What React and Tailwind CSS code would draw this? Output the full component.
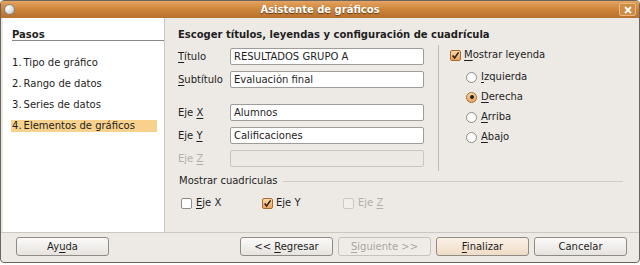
import React from 'react';

const font = "font-['DejaVu_Sans',sans-serif]";

function U({ children }) {
  return <span className="underline decoration-1 underline-offset-[2px]">{children}</span>;
}

function Check({ checked, disabled }) {
  if (disabled) {
    return <span className="block w-[11px] h-[11px] rounded-[2px] border border-[#cbc7c2] bg-[#f1efec]" />;
  }
  if (checked) {
    return (
      <span className="flex items-center justify-center w-[11px] h-[11px] rounded-[2px] border border-[#a36c2f] bg-gradient-to-b from-[#f9d7a6] to-[#eca35c]">
        <svg viewBox="0 0 9 9" className="w-[9px] h-[9px]">
          <path d="M1.6 4.6 L3.6 7 L7.6 1.4" fill="none" stroke="#2b2418" strokeWidth="1.6" />
        </svg>
      </span>
    );
  }
  return <span className="block w-[11px] h-[11px] rounded-[2px] border border-[#8f8b86] bg-white" />;
}

function Radio({ checked }) {
  return (
    <span
      className={`flex items-center justify-center w-[11px] h-[11px] rounded-full border ${
        checked
          ? 'border-[#a36c2f] bg-gradient-to-b from-[#f9d7a6] to-[#eca35c]'
          : 'border-[#8f8b86] bg-white'
      }`}
    >
      {checked && <span className="block w-[4px] h-[4px] rounded-full bg-[#222]" />}
    </span>
  );
}

function Field({ label, value, disabled }) {
  return (
    <div className="flex items-center h-[17px]">
      <span className={`w-[52px] leading-[12px] ${disabled ? 'text-[#b3afaa]' : 'text-[#1e1e1e]'}`}>{label}</span>
      <div
        className={`w-[194px] h-[17px] rounded-[2px] border flex items-center pl-[3px] leading-[12px] ${
          disabled ? 'border-[#c8c4bf] bg-[#ece9e5]' : 'border-[#9f9b96] bg-white text-[#1e1e1e]'
        }`}
      >
        {value}
      </div>
    </div>
  );
}

function Button({ children, variant }) {
  const look =
    variant === 'disabled'
      ? 'border-[#c6c2bc] bg-[#efece8] text-[#aaa6a1]'
      : variant === 'default'
      ? 'border-[#8f8b86] bg-gradient-to-b from-[#fbf1e6] to-[#efdcc7] text-[#1e1e1e]'
      : 'border-[#8f8b86] bg-gradient-to-b from-[#fbfaf9] to-[#e6e3df] text-[#1e1e1e]';
  return (
    <div className={`w-[93px] h-[19px] rounded-[3px] border flex items-center justify-center leading-[12px] ${look}`}>
      <span className="whitespace-pre">{children}</span>
    </div>
  );
}

export default function App() {
  const steps = ['Tipo de gráfico', 'Rango de datos', 'Series de datos', 'Elementos de gráficos'];

  return (
    <div className={`w-[640px] h-[265px] bg-white text-[10px] ${font}`}>
      <div className="h-[263px] flex flex-col overflow-hidden rounded-[4px] border border-[#6b655f] bg-[#edeae6]">
        {/* Title bar */}
        <div className="h-[17px] shrink-0 grid grid-cols-[1fr_auto_1fr] items-center px-[3px] bg-gradient-to-b from-[#e4a461] via-[#cd8439] to-[#b8712f]">
          <span className="block w-[11px] h-[11px] rounded-full border border-[#8a7f76] bg-[radial-gradient(circle_at_35%_35%,#ffffff,#d9d9d9_60%,#a9a9a9)]" />
          <span className="font-bold text-white leading-[17px] [text-shadow:0_1px_1px_rgba(60,30,0,0.7)]">
            Asistente de gráficos
          </span>
          <div className="flex justify-end">
            <div className="w-[17px] h-[13px] rounded-[2px] border border-[#eab982] bg-[#d08c45] flex items-center justify-center">
              <svg viewBox="0 0 8 8" className="w-[8px] h-[8px]">
                <path d="M1 1 L7 7 M7 1 L1 7" stroke="#ffffff" strokeWidth="1.8" />
              </svg>
            </div>
          </div>
        </div>

        {/* Main */}
        <div className="h-[214px] shrink-0 flex pl-[2px]">
          <div className="w-[162px] bg-white border-r border-[#cbc7c1] pt-[11px]">
            <div className="ml-[9px] font-bold leading-[11px] text-[#1e1e1e]">Pasos</div>
            <div className="ml-[9px] h-px bg-[#8c8a87]" />
            <div className="mt-[16px] flex flex-col gap-[9px]">
              {steps.map((s, i) => (
                <div
                  key={s}
                  className={`ml-[8px] w-[146px] h-[12px] pl-[1px] leading-[12px] text-[#1e1e1e] flex ${
                    i === 3 ? 'bg-[#f8d28d]' : ''
                  }`}
                >
                  <span>{i + 1}.</span>
                  <span className="ml-[2px]">{s}</span>
                </div>
              ))}
            </div>
          </div>

          <div className="flex-1 flex flex-col pl-[13px] pt-[11px] text-[#1e1e1e]">
            <div className="font-bold leading-[12px]">
              Escoger títulos, leyendas y configuración de cuadrícula
            </div>

            <div className="mt-[4px] flex">
              <div className="w-[246px] pt-[3px] flex flex-col">
                <Field label={<><U>T</U>ítulo</>} value="RESULTADOS GRUPO A" />
                <div className="mt-[6px]">
                  <Field label={<><U>S</U>ubtítulo</>} value="Evaluación final" />
                </div>
                <div className="mt-[16px]">
                  <Field label={<>Eje <U>X</U></>} value="Alumnos" />
                </div>
                <div className="mt-[6px]">
                  <Field label={<>Eje <U>Y</U></>} value="Calificaciones" />
                </div>
                <div className="mt-[6px]">
                  <Field label={<>Eje <U>Z</U></>} value="" disabled />
                </div>
              </div>

              <div className="ml-[14px] w-px h-[126px] bg-[#bfbbb5]" />

              <div className="pl-[11px] pt-[3px] flex flex-col">
                <div className="h-[14px] flex items-center gap-[3px]">
                  <Check checked />
                  <span className="leading-[12px]"><U>M</U>ostrar leyenda</span>
                </div>
                <div className="mt-[8px] pl-[16px] flex flex-col gap-[6px]">
                  {[
                    ['I', 'zquierda', false],
                    ['D', 'erecha', true],
                    ['A', 'rriba', false],
                    ['A', 'bajo', false],
                  ].map(([m, rest, on]) => (
                    <div key={m + rest} className="h-[14px] flex items-center gap-[4px]">
                      <Radio checked={on} />
                      <span className="leading-[12px]"><U>{m}</U>{rest}</span>
                    </div>
                  ))}
                </div>
              </div>
            </div>

            <div className="mt-[4px] h-[12px] flex items-center pr-[16px]">
              <span className="ml-[1px] leading-[12px]">Mostrar cuadriculas</span>
              <div className="ml-[5px] flex-1 h-px bg-[#cfcbc5]" />
            </div>

            <div className="mt-[10px] pl-[3px] flex">
              <div className="w-[81px] h-[12px] flex items-center gap-[4px]">
                <Check />
                <span className="leading-[12px]"><U>E</U>je X</span>
              </div>
              <div className="w-[81px] h-[12px] flex items-center gap-[3px]">
                <Check checked />
                <span className="leading-[12px]">Eje Y</span>
              </div>
              <div className="w-[81px] h-[12px] flex items-center gap-[4px]">
                <Check disabled />
                <span className="leading-[12px] text-[#b3afaa]">Eje <U>Z</U></span>
              </div>
            </div>
          </div>
        </div>

        <div className="h-px shrink-0 bg-[#cbc7c1]" />

        {/* Footer */}
        <div className="h-[29px] shrink-0 flex items-start pt-[4px] pl-[15px] pr-[12px]">
          <Button>Ay<U>u</U>da</Button>
          <div className="ml-auto flex gap-[5px]">
            <Button>&lt;&lt; <U>R</U>egresar</Button>
            <Button variant="disabled"><U>S</U>iguiente &gt;&gt;</Button>
            <Button variant="default"><U>F</U>inalizar</Button>
            <Button>Cancelar</Button>
          </div>
        </div>
      </div>
    </div>
  );
}
